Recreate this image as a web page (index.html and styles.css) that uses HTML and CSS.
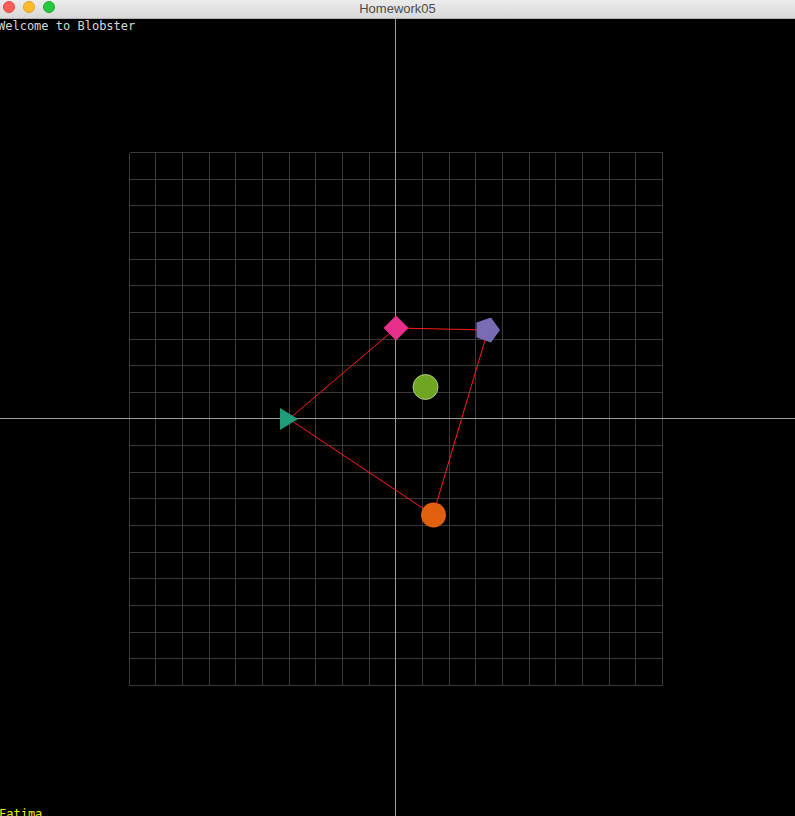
FILE: index.html
```html
<!DOCTYPE html>
<html>
<head>
<meta charset="utf-8">
<title>Homework05</title>
<link rel="stylesheet" href="styles.css">
</head>
<body>
<div class="window">
  <div class="titlebar">
    <div class="lights">
      <span class="light red"></span>
      <span class="light yellow"></span>
      <span class="light green"></span>
    </div>
    <div class="title">Homework05</div>
  </div>
  <div class="canvas">
    <svg class="scene" width="795" height="797" viewBox="0 19 795 797">
      <g class="grid">
        <line x1="129.5" y1="152.5" x2="129.5" y2="685.5"/>
        <line x1="155.5" y1="152.5" x2="155.5" y2="685.5"/>
        <line x1="182.5" y1="152.5" x2="182.5" y2="685.5"/>
        <line x1="209.5" y1="152.5" x2="209.5" y2="685.5"/>
        <line x1="235.5" y1="152.5" x2="235.5" y2="685.5"/>
        <line x1="262.5" y1="152.5" x2="262.5" y2="685.5"/>
        <line x1="289.5" y1="152.5" x2="289.5" y2="685.5"/>
        <line x1="315.5" y1="152.5" x2="315.5" y2="685.5"/>
        <line x1="342.5" y1="152.5" x2="342.5" y2="685.5"/>
        <line x1="369.5" y1="152.5" x2="369.5" y2="685.5"/>
        <line x1="422.5" y1="152.5" x2="422.5" y2="685.5"/>
        <line x1="449.5" y1="152.5" x2="449.5" y2="685.5"/>
        <line x1="475.5" y1="152.5" x2="475.5" y2="685.5"/>
        <line x1="502.5" y1="152.5" x2="502.5" y2="685.5"/>
        <line x1="529.5" y1="152.5" x2="529.5" y2="685.5"/>
        <line x1="555.5" y1="152.5" x2="555.5" y2="685.5"/>
        <line x1="582.5" y1="152.5" x2="582.5" y2="685.5"/>
        <line x1="609.5" y1="152.5" x2="609.5" y2="685.5"/>
        <line x1="635.5" y1="152.5" x2="635.5" y2="685.5"/>
        <line x1="662.5" y1="152.5" x2="662.5" y2="685.5"/>

        <line y1="152.5" x1="129.5" y2="152.5" x2="662.5"/>
        <line y1="179.5" x1="129.5" y2="179.5" x2="662.5"/>
        <line y1="205.5" x1="129.5" y2="205.5" x2="662.5"/>
        <line y1="232.5" x1="129.5" y2="232.5" x2="662.5"/>
        <line y1="259.5" x1="129.5" y2="259.5" x2="662.5"/>
        <line y1="285.5" x1="129.5" y2="285.5" x2="662.5"/>
        <line y1="312.5" x1="129.5" y2="312.5" x2="662.5"/>
        <line y1="339.5" x1="129.5" y2="339.5" x2="662.5"/>
        <line y1="365.5" x1="129.5" y2="365.5" x2="662.5"/>
        <line y1="392.5" x1="129.5" y2="392.5" x2="662.5"/>
        <line y1="445.5" x1="129.5" y2="445.5" x2="662.5"/>
        <line y1="472.5" x1="129.5" y2="472.5" x2="662.5"/>
        <line y1="498.5" x1="129.5" y2="498.5" x2="662.5"/>
        <line y1="525.5" x1="129.5" y2="525.5" x2="662.5"/>
        <line y1="552.5" x1="129.5" y2="552.5" x2="662.5"/>
        <line y1="578.5" x1="129.5" y2="578.5" x2="662.5"/>
        <line y1="605.5" x1="129.5" y2="605.5" x2="662.5"/>
        <line y1="632.5" x1="129.5" y2="632.5" x2="662.5"/>
        <line y1="658.5" x1="129.5" y2="658.5" x2="662.5"/>
        <line y1="685.5" x1="129.5" y2="685.5" x2="662.5"/>
      </g>
      <g class="axes">
        <line x1="395.5" y1="19" x2="395.5" y2="816"/>
        <line x1="0" y1="418.5" x2="795" y2="418.5"/>
      </g>
      <g class="links">
        <polyline points="396,328 488,330 433,515 289,419 396,328"/>
      </g>
      <polygon class="diamond" points="396,315.5 408.5,328 396,340.5 383.5,328"/>
      <polygon class="pentagon" points="500,330 491,342.4 476.5,337.6 476.5,322.4 491,317.6"/>
      <circle class="blob-green" cx="425.5" cy="387" r="12.5"/>
      <polygon class="triangle" points="280,408 298,419 280,430"/>
      <circle class="blob-orange" cx="433.5" cy="515" r="12.5"/>
    </svg>
    <div class="welcome">Welcome to Blobster</div>
    <div class="player">Fatima</div>
  </div>
</div>
</body>
</html>
```

FILE: styles.css
```css
html, body {
  margin: 0;
  padding: 0;
  background: #000;
  overflow: hidden;
}

.window {
  width: 795px;
  height: 816px;
  display: flex;
  flex-direction: column;
}

.titlebar {
  height: 18px;
  flex: none;
  position: relative;
  background: linear-gradient(#ececec, #d8d8d8);
  border-bottom: 1px solid #b4b4b4;
  display: flex;
  align-items: center;
  justify-content: center;
}

.lights {
  position: absolute;
  left: 3px;
  top: 1px;
  display: flex;
  gap: 8px;
}

.light {
  width: 12px;
  height: 12px;
  border-radius: 50%;
  box-sizing: border-box;
}

.light.red { background: #fc5f57; border: 1px solid #e2463f; }
.light.yellow { background: #fdbc2e; border: 1px solid #e0a028; }
.light.green { background: #28c840; border: 1px solid #1aab29; }

.title {
  font-family: "Helvetica Neue", "Liberation Sans", Arial, sans-serif;
  font-size: 13px;
  color: #4c4c4c;
  line-height: 18px;
  margin-top: -1px;
}

.canvas {
  flex: 1;
  position: relative;
  background: #000;
  overflow: hidden;
}

.scene {
  display: block;
}

.grid line {
  stroke: #3a3a3a;
  stroke-width: 1;
  shape-rendering: crispEdges;
}

.axes line {
  stroke: #9c9c9c;
  stroke-width: 1;
  shape-rendering: crispEdges;
}

.links polyline {
  fill: none;
  stroke: #ff1a1a;
  stroke-width: 1;
}

.diamond { fill: #e6308a; }
.pentagon { fill: #7a6cb4; }
.triangle { fill: #1f9c78; }
.blob-green { fill: #6ea521; stroke: #c9dcaa; stroke-width: 0.8; }
.blob-orange { fill: #e0600d; }

.welcome {
  position: absolute;
  left: -2px;
  top: 0px;
  font-family: "DejaVu Sans Mono", "Liberation Mono", monospace;
  font-size: 12px;
  line-height: 15px;
  color: #d8d8d8;
}

.player {
  position: absolute;
  left: -1px;
  bottom: -6px;
  font-family: "DejaVu Sans Mono", "Liberation Mono", monospace;
  font-size: 12px;
  line-height: 15px;
  color: #f2f200;
}
```
